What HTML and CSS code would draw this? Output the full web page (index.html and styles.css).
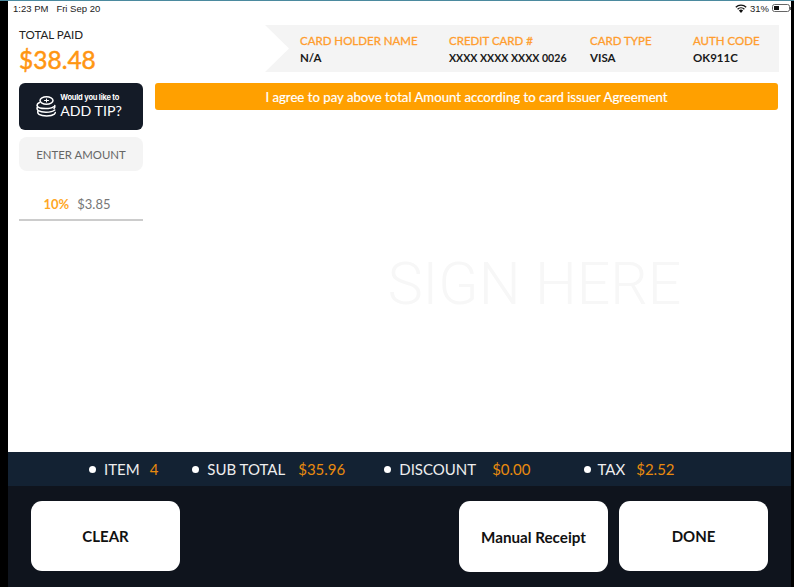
FILE: index.html
```html
<!DOCTYPE html>
<html lang="en">
<head>
<meta charset="utf-8">
<title>Payment signature</title>
<link rel="stylesheet" href="styles.css">
</head>
<body>
<div class="screen">
  <div class="status">
    <div class="status-left"><span>1:23 PM</span><span>Fri Sep 20</span></div>
    <div class="status-right">
      <svg class="wifi" width="12" height="9" viewBox="0 0 12 9"><path d="M6 9 3.900 6.600a3 3 0 0 1 4.200 0Z" fill="#111"/><path d="M2.600 5.200a4.900 4.900 0 0 1 6.800 0M.8 3.200a7.500 7.500 0 0 1 10.400 0" fill="none" stroke="#111" stroke-width="1.300"/></svg>
      <span>31%</span>
      <div class="battery-wrap"><div class="battery"><div class="battery-fill"></div></div><div class="battery-nub"></div></div>
    </div>
  </div>
  <div class="main">
    <aside class="side">
      <div class="total-label">TOTAL PAID</div>
      <div class="total-value">$38.48</div>
      <div class="tip">
        <svg class="coins" width="20" height="22" viewBox="0 0 20 22" fill="none" stroke="#fff" stroke-width="1.500" stroke-linecap="round">
          <ellipse cx="10.500" cy="4.500" rx="6.500" ry="3.700"/>
          <path d="M8.500 4.500h4M10.500 3v3" stroke-width="1"/>
          <path d="M3.500 6.500C1.500 7.500.9 8.800 1.100 9.800c.5 1.800 4 2.800 8.400 2.800 3.500 0 6.500-.6 8-1.900"/>
          <path d="M1.300 11.300c-.6 1.700-.3 2.500 1 3.300 1.800 1.100 4.500 1.600 7.700 1.600 3.700 0 7-.7 8.700-2.200"/>
          <path d="M2 15c-.6 1.600-.3 2.500 1 3.300 1.800 1.100 4.500 1.600 7.700 1.600 3.300 0 6-.6 7.600-1.800.6-.5.9-1 1-1.600"/>
          <path d="M18.800 9.500c.2 1.200-.1 2.200-.8 3"/>
        </svg>
        <div class="tip-text"><span class="tip-small">Would you like to</span><span class="tip-big">ADD TIP?</span></div>
      </div>
      <div class="enter">ENTER AMOUNT</div>
      <div class="percent"><b>10%</b><span>$3.85</span></div>
    </aside>
    <section class="content">
      <div class="card">
        <div class="field f1"><div class="k">CARD HOLDER NAME</div><div class="v">N/A</div></div>
        <div class="field f2"><div class="k">CREDIT CARD #</div><div class="v">XXXX XXXX XXXX 0026</div></div>
        <div class="field f3"><div class="k">CARD TYPE</div><div class="v">VISA</div></div>
        <div class="field f4"><div class="k">AUTH CODE</div><div class="v">OK911C</div></div>
      </div>
      <div class="agree">I agree to pay above total Amount according to card issuer Agreement</div>
      <div class="pad"><span>SIGN HERE</span></div>
    </section>
  </div>
  <div class="summary">
    <div class="item i1"><i></i><span class="l">ITEM</span><span class="n">4</span></div>
    <div class="item i2"><i></i><span class="l">SUB TOTAL</span><span class="n">$35.96</span></div>
    <div class="item i3"><i></i><span class="l">DISCOUNT</span><span class="n">$0.00</span></div>
    <div class="item i4"><i></i><span class="l">TAX</span><span class="n">$2.52</span></div>
  </div>
  <div class="footer">
    <div class="btn">CLEAR</div>
    <div class="btn manual">Manual Receipt</div>
    <div class="btn">DONE</div>
  </div>
</div>
</body>
</html>
```
FILE: styles.css
```css
* { box-sizing: border-box; }
html, body { margin: 0; height: 100%; background: #000; overflow: hidden; }
body { border-top: 1px solid #4b8a9f; font-family: "Lato", sans-serif; }
.screen { margin-left: 8px; width: 783px; height: 586px; display: flex; flex-direction: column; background: #fff; }

.status { height: 14px; flex: none; display: flex; justify-content: space-between; align-items: center; padding: 0 0 0 5px; font-family: "Liberation Sans", sans-serif; font-size: 9.500px; color: #222; }
.status-left { display: flex; gap: 8px; }
.status-right { display: flex; align-items: center; gap: 3px; }
.battery-wrap { display: flex; align-items: center; }
.battery { width: 18px; height: 8px; border: 1px solid #666; border-radius: 2.500px; padding: 1px; }
.battery-fill { width: 5px; height: 100%; background: #111; }
.battery-nub { width: 1px; height: 3px; background: #666; }

.main { flex: 1; display: flex; min-height: 0; }
.side { width: 147px; flex: none; padding: 12px 0 0 11px; }
.total-label { width: 124px; font-size: 11.600px; line-height: 16px; color: #222; height: 16px; }
.total-value { font-size: 24.500px; line-height: 30px; height: 38px; margin-top: 2px; color: #ff9612; -webkit-text-stroke: .5px #ff9612; }
.tip { width: 124px; height: 47px; border-radius: 6px; background: #141b27; display: flex; align-items: center; justify-content: center; gap: 4px; color: #fff; padding-right: 4px; }
.tip-text { display: flex; flex-direction: column; }
.tip-small { font-size: 7.500px; line-height: 9px; font-weight: 700; font-family: "Inter", sans-serif; letter-spacing: -.2px; }
.tip-big { font-size: 14.200px; line-height: 18px; }
.enter { width: 124px; height: 34px; margin-top: 7px; border-radius: 8px; background: #f4f4f4; color: #666; font-size: 11.400px; display: flex; align-items: center; justify-content: center; }
.percent { width: 124px; height: 50px; border-bottom: 2px solid #ccc; display: flex; justify-content: center; align-items: flex-end; gap: 8px; padding: 0 8px 7px 0; font-size: 13px; line-height: 16px; color: #777; }
.percent b { color: #ffa726; font-weight: 700; }

.content { flex: 1; display: flex; flex-direction: column; padding-top: 10px; min-width: 0; }
.card { margin-left: 110px; width: 514px; height: 47px; flex: none; background: #f4f4f4; clip-path: polygon(0 0, 100% 0, 100% 100%, 0 100%, 24px 50%); display: flex; padding-top: 8px; }
.field { flex: none; }
.f1 { margin-left: 35px; width: 149px; }
.f2 { width: 141px; }
.f3 { width: 103px; }
.k { font-size: 11.500px; line-height: 16px; color: #ff9d2e; -webkit-text-stroke: .3px #ff9d2e; }
.v { font-size: 11.500px; line-height: 18px; font-weight: 700; color: #1a1a1a; }
.f2 .v { font-size: 10.600px; }
.agree { margin: 11px 13px 0 0; height: 27px; flex: none; border-radius: 3px; background: #ffa000; color: #fff; font-size: 13.200px; -webkit-text-stroke: .2px #fff; display: flex; align-items: center; justify-content: center; }
.pad { flex: 1; display: flex; align-items: center; justify-content: center; padding: 4px 0 0 123px; }
.pad span { font-family: "Roboto", "Liberation Sans", sans-serif; font-weight: 300; font-size: 59px; color: #f7f7f7; white-space: nowrap; }

.summary { height: 34px; flex: none; background: #132233; display: flex; align-items: center; font-size: 15px; color: #eee; }
.item { display: flex; align-items: center; flex: none; }
.item i { width: 7px; height: 7px; border-radius: 50%; background: #fff; margin-right: 8px; flex: none; }
.n { color: #e88a0e; margin-left: 10px; }
.i1 { margin-left: 81px; }
.i2 { margin-left: 34px; }
.i2 .n { margin-left: 13px; }
.i3 { margin-left: 39px; }
.i3 .n { margin-left: 16px; }
.i4 { margin-left: 54px; }
.i4 i { margin-right: 6px; }
.i4 .n { margin-left: 11px; }

.footer { flex: none; height: 101px; background: #0f141d; display: flex; padding: 15px 23px 0; gap: 11px; }
.btn { width: 149px; height: 70px; border-radius: 11px; background: #fff; color: #111; font-size: 15px; font-weight: 700; display: flex; align-items: center; justify-content: center; }
.btn:first-child { margin-right: 268px; }
.manual { height: 71px; font-size: 15.200px; }
```
